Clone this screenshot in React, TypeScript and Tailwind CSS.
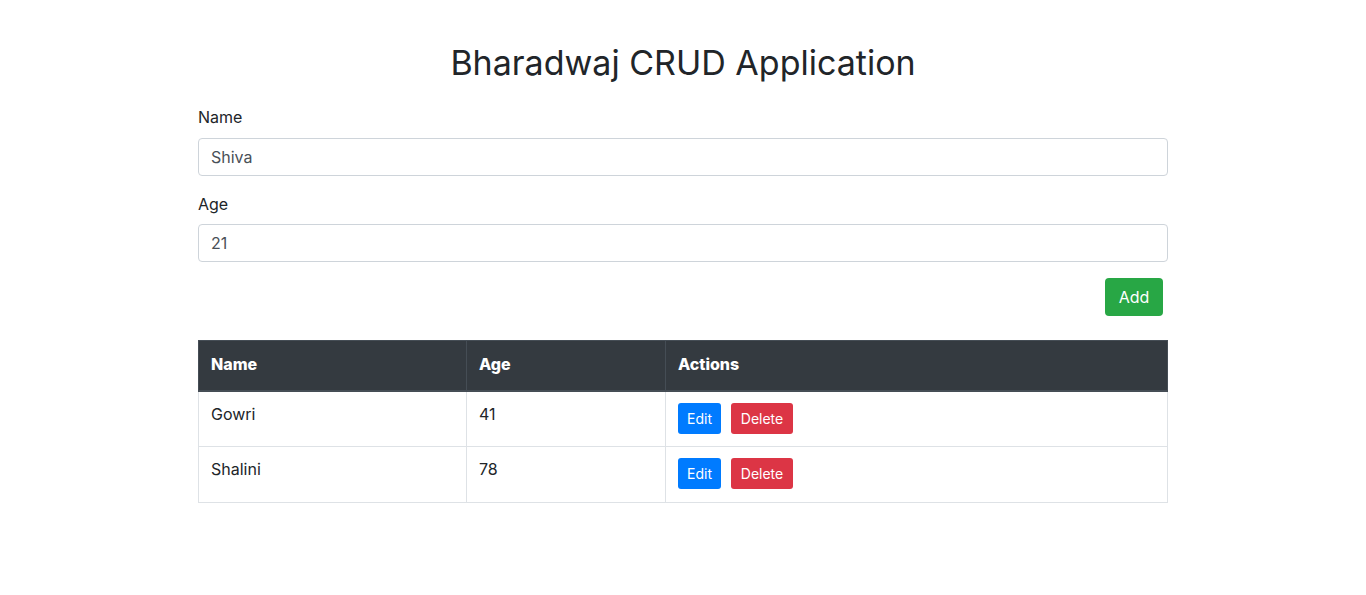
import { useState } from 'react';

type Person = { name: string; age: string };

export default function App() {
  const [name, setName] = useState('Shiva');
  const [age, setAge] = useState('21');
  const [people] = useState<Person[]>([
    { name: 'Gowri', age: '41' },
    { name: 'Shalini', age: '78' },
  ]);

  return (
    <div className="min-h-screen bg-white text-[#212529] font-['Inter','Open_Sans',sans-serif]">
      <div className="mx-auto w-[970px] pt-[41px]">
        <h1 className="text-center text-[34px] leading-[43px] font-normal mb-[21px]">
          Bharadwaj CRUD Application
        </h1>

        <div className="mb-[16px]">
          <label className="block text-[16px] leading-[24px] mb-[9px]" htmlFor="name">
            Name
          </label>
          <input
            id="name"
            className="w-full h-[38px] px-[12px] rounded-[4px] border border-[#ced4da] text-[16px] text-[#495057] outline-none"
            value={name}
            onChange={(e) => setName(e.target.value)}
          />
        </div>

        <div className="mb-[16px]">
          <label className="block text-[16px] leading-[24px] mb-[8px]" htmlFor="age">
            Age
          </label>
          <input
            id="age"
            className="w-full h-[38px] px-[12px] rounded-[4px] border border-[#ced4da] text-[16px] text-[#495057] outline-none"
            value={age}
            onChange={(e) => setAge(e.target.value)}
          />
        </div>

        <div className="flex justify-end pr-[5px] mb-[24px]">
          <button className="h-[38px] w-[58px] rounded-[4px] bg-[#28a745] text-white text-[16px]">
            Add
          </button>
        </div>

        <table className="w-full border-collapse text-[16px]">
          <thead>
            <tr className="bg-[#343a40] text-white">
              <th className="w-[268px] h-[50px] px-[12px] pb-[2px] text-left font-extrabold border border-[#454d55] border-b-2">
                Name
              </th>
              <th className="w-[199px] h-[50px] px-[12px] pb-[2px] text-left font-extrabold border border-[#454d55] border-b-2">
                Age
              </th>
              <th className="h-[50px] px-[12px] pb-[2px] text-left font-extrabold border border-[#454d55] border-b-2">
                Actions
              </th>
            </tr>
          </thead>
          <tbody>
            {people.map((p) => (
              <tr key={p.name}>
                <td className="h-[56px] px-[12px] pt-[10px] align-top leading-[24px] border border-[#dee2e6]">{p.name}</td>
                <td className="h-[56px] px-[12px] pt-[10px] align-top leading-[24px] border border-[#dee2e6]">{p.age}</td>
                <td className="h-[56px] px-[12px] pt-[11px] align-top border border-[#dee2e6]">
                  <div className="flex gap-[10px]">
                    <button className="h-[31px] w-[43px] rounded-[3px] bg-[#007bff] text-white text-[14px]">Edit</button>
                    <button className="h-[31px] w-[62px] rounded-[3px] bg-[#dc3545] text-white text-[14px]">Delete</button>
                  </div>
                </td>
              </tr>
            ))}
          </tbody>
        </table>
      </div>
    </div>
  );
}
